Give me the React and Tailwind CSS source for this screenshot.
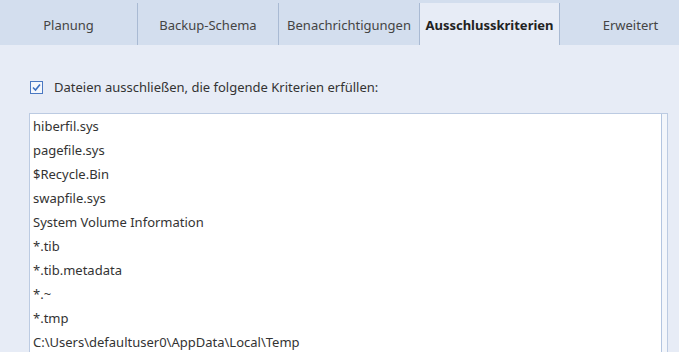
import React from "react";

const tabs = [
  { label: "Planung", w: "w-[137px]" },
  { label: "Backup-Schema", w: "w-[141px]" },
  { label: "Benachrichtigungen", w: "w-[141px]" },
  { label: "Ausschlusskriterien", w: "w-[141px]", active: true },
  { label: "Erweitert", w: "w-[141px]" },
];

const items = [
  "hiberfil.sys",
  "pagefile.sys",
  "$Recycle.Bin",
  "swapfile.sys",
  "System Volume Information",
  "*.tib",
  "*.tib.metadata",
  "*.~",
  "*.tmp",
  "C:\\Users\\defaultuser0\\AppData\\Local\\Temp",
];

export default function App() {
  return (
    <div
      className="w-[679px] h-[352px] overflow-hidden bg-[#e7ecf6] text-[#333] text-[13px]"
      style={{ fontFamily: '"Noto Sans", "Open Sans", sans-serif' }}
    >
      {/* Tab bar */}
      <div className="flex h-[45px] bg-[#d3deee] pt-[3px] overflow-hidden">
        {tabs.map((t, i) => (
          <div
            key={t.label}
            className={`${t.w} shrink-0 flex items-center justify-center pt-[3px] ${
              t.active
                ? "bg-[#e7ecf6] font-bold text-[#222]"
                : "text-[#444]"
            } ${i > 0 && !t.active && !tabs[i - 1].active ? "border-l border-[#a9bad3]" : ""} ${
              t.active ? "border-l border-r border-[#a9bad3]" : ""
            }`}
          >
            {t.label}
          </div>
        ))}
      </div>

      {/* Content */}
      <div className="pl-[29px] pr-[11px] pt-[33px]">
        <label className="flex items-center gap-[11px] pl-[1px]">
          <span className="w-[13px] h-[13px] border border-[#4a78c2] bg-[#f4f7fc] flex items-center justify-center">
            <svg width="11" height="11" viewBox="0 0 11 11">
              <path d="M2 5.5 L4.5 8 L9 2.5" fill="none" stroke="#3b6fc0" strokeWidth="1.6" />
            </svg>
          </span>
          <span>Dateien ausschließen, die folgende Kriterien erfüllen:</span>
        </label>

        <div className="mt-[15px] flex h-[260px] bg-white border border-[#bccbe2]">
          <div className="flex-1 pt-[1px] pl-[3px]">
            {items.map((it) => (
              <div key={it} className="h-[24px] flex items-center whitespace-nowrap">
                {it}
              </div>
            ))}
          </div>
          <div className="w-[6px] border-l border-[#b3c5e0] bg-[#f3f6fb]" />
        </div>
      </div>
    </div>
  );
}
